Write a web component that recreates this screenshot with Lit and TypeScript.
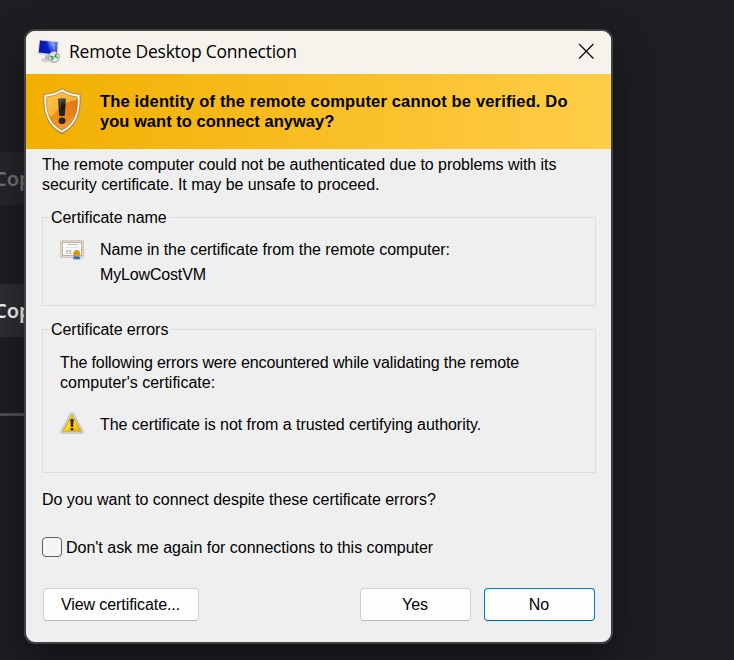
import { LitElement, html, css, svg } from "lit";
import { customElement, property } from "lit/decorators.js";

const computerIcon = svg`
  <svg width="24" height="24" viewBox="0 0 24 24">
    <defs>
      <linearGradient id="screen" x1="0" y1=".2" x2="1" y2="0">
        <stop offset="0" stop-color="#0a1594"/><stop offset=".42" stop-color="#0c22d2"/>
        <stop offset=".5" stop-color="#3358e6"/><stop offset=".72" stop-color="#8fa8f2"/><stop offset="1" stop-color="#2b45d0"/>
      </linearGradient>
      <linearGradient id="depth" x1="0" y1="0" x2="0" y2="1">
        <stop offset=".3" stop-color="#0618c4" stop-opacity="0"/><stop offset="1" stop-color="#0618c4" stop-opacity=".9"/>
      </linearGradient>
    </defs>
    <ellipse cx="9.500" cy="21" rx="5.500" ry="2.300" fill="#cfd1d2"/>
    <path d="M8 16l6 1 .5 4-6-.3z" fill="#b5b9bd"/>
    <path d="M2 .7L21.600 2.600 21 17.800 .6 15z" fill="#d0d3d8"/>
    <path d="M3 1.500L20.400 3.200 19.800 15.800 1.800 13.300z" fill="url(#screen)"/>
    <path d="M3 1.500L20.400 3.200 19.800 15.800 1.800 13.300z" fill="url(#depth)"/>
    <circle cx="17" cy="18" r="5.400" fill="#e4e6e5" stroke="#9a9e9f" stroke-width="1"/>
    <path d="M13.200 17l2.800 1.600-1.600 2.700M20.800 18.600L18 17.400l1.700-2.700" fill="none" stroke="#329447" stroke-width="1.500"/>
  </svg>`;

const shieldIcon = svg`
  <svg width="42" height="50" viewBox="0 0 42 50">
    <defs>
      <linearGradient id="face" x1="0" y1="0" x2=".8" y2="1">
        <stop offset="0" stop-color="#ffc43a"/><stop offset=".5" stop-color="#f29a1d"/>
        <stop offset="1" stop-color="#f29a35"/>
      </linearGradient>
      <linearGradient id="glow" x1="1" y1="0" x2=".2" y2="1">
        <stop offset="0" stop-color="#dd6508" stop-opacity=".8"/><stop offset="1" stop-color="#e97912" stop-opacity=".15"/>
      </linearGradient>
      <linearGradient id="mark" x1="0" y1="0" x2="0" y2="1">
        <stop offset="0" stop-color="#5b5140"/><stop offset=".45" stop-color="#17130d"/>
        <stop offset="1" stop-color="#2c2722"/>
      </linearGradient>
      <clipPath id="inside"><path d="M21 6Q28 10.500 36.200 11C37 25 34 37.300 21 44C8 37.300 5 25 5.800 11Q14 10.500 21 6Z"/></clipPath>
    </defs>
    <path d="M21 3.600Q28.500 8.800 39.300 9.200C40 27 36 41 21 48.400C6 41 2 27 2.700 9.200Q13.500 8.800 21 3.600Z" fill="#8d6a20" opacity=".45"/>
    <path d="M21 2.700Q28.500 7.900 39 8.300C40 26 36 39.800 21 47C6 39.800 2 26 3 8.300Q13.500 7.900 21 2.700Z" fill="#f7f5ed" stroke="#91856a" stroke-width=".9"/>
    <path d="M21 6Q28 10.500 36.200 11C37 25 34 37.300 21 44C8 37.300 5 25 5.800 11Q14 10.500 21 6Z" fill="url(#face)" stroke="#a86617" stroke-width=".7"/>
    <g clip-path="url(#inside)">
      <path d="M3 4H40V13Q22 15 15 26Q11 32 3 33Z" fill="#ffd565" opacity=".4"/>
      <path d="M40 13Q22 15 15 26Q11 32 3 33L12 42Q30 38 40 21Z" fill="url(#glow)"/>
    </g>
    <path d="M17 12.800Q21 11.700 25 12.800L23.700 30H18.300Z" fill="url(#mark)"/>
    <ellipse cx="21" cy="34.700" rx="3.500" ry="3.300" fill="#29231c"/>
    <path d="M18.300 13.800h1.600v9h-1.100z" fill="#918b7c" opacity=".4"/>
  </svg>`;

const certificateIcon = svg`
  <svg width="24" height="22" viewBox="0 0 24 22">
    <rect x=".5" y=".5" width="23" height="17" rx="1.500" fill="#ddd4c7" stroke="#c2b7a8"/>
    <rect x=".8" y=".8" width="22.400" height="16.400" rx="1" fill="none" stroke="#eee8dd" stroke-width="1" stroke-dasharray="1 1"/>
    <rect x="2.500" y="2.500" width="19" height="13" fill="#fff" stroke="#bcb0a0"/>
    <path d="M7.500 4.500h10" stroke="#a9b5dc"/>
    <path d="M5.500 7.500h13" stroke="#e0e0e6"/>
    <path d="M6 10.500h5.500M6 13.500h6" stroke="#c8c8ce"/>
    <path d="M6 11.700h6" stroke="#9a9dab" stroke-dasharray="2 1"/>
    <path d="M14.300 14.500L13.200 19.700 15.300 18.700 16.300 20 17 16zM18.700 14.500l1.600 5.200-2-.9-1.300 1.200-.5-4z" fill="#1768e3"/>
    <circle cx="16.700" cy="13.500" r="3.100" fill="#e3a412" stroke="#c4820b" stroke-width=".8"/>
    <circle cx="16.700" cy="13.500" r="1.100" fill="#bd7a0a"/>
  </svg>`;

const warningIcon = svg`
  <svg width="24" height="22" viewBox="0 0 24 22">
    <defs>
      <linearGradient id="warn" x1="0" y1="0" x2="1" y2="1">
        <stop offset="0" stop-color="#f2b900"/><stop offset=".5" stop-color="#ffda18"/>
        <stop offset="1" stop-color="#f4ae00"/>
      </linearGradient>
    </defs>
    <path d="M10.500 1.200Q12 0 13.500 1.200L23.300 19.500Q23.500 21 22 21.200H2Q.5 21 .7 19.500Z" fill="#d5d8dc" stroke="#b5b7bb" stroke-width=".8"/>
    <path d="M12 2.800L21.200 19.200H2.800Z" fill="url(#warn)" stroke="#c79612" stroke-width=".8"/>
    <path d="M10.400 7h3.200l-.5 8h-2.200z" fill="#25262a"/>
    <rect x="10.500" y="16" width="3" height="2.400" rx="1" fill="#25262a"/>
  </svg>`;

@customElement("group-box")
class GroupBox extends LitElement {
  @property() label = "";
  static styles = css`
    :host { display: block; }
    fieldset {
      box-sizing: border-box; height: 100%; min-width: 0; margin: 0;
      border: 1px solid #dcdcdc; padding: 0 17px;
    }
    legend {
      margin-left: -11px; padding: 0 2px; line-height: 22px; height: 20px;
      white-space: nowrap; letter-spacing: -.05px;
    }
  `;
  render() {
    return html`<fieldset><legend>${this.label}</legend><slot></slot></fieldset>`;
  }
}

@customElement("app-root")
class AppRoot extends LitElement {
  static styles = css`
    :host {
      display: block; position: relative; box-sizing: border-box;
      width: 734px; height: 660px; padding: 29px 0 0 24px; overflow: hidden;
      background: #1e1d22; color: #000;
      font: 16px/20px "Liberation Sans", Arial, sans-serif;
    }
    svg { display: block; flex: none; }
    .behind {
      position: absolute; left: 0; width: 40px; height: 53px;
      background: #2e2d32; color: #f4f4f4;
      font: 600 20px/53px "Noto Sans", "Open Sans", sans-serif;
    }
    .behind span { margin-left: -6px; }
    .faded { top: 152px; background: #26252a; color: #727175; }
    .solid { top: 284px; }
    .rule { position: absolute; left: 0; top: 413px; width: 40px; height: 3px; background: #4e4d51; }
    .dialog {
      position: relative; box-sizing: border-box; width: 589px; height: 615px;
      display: flex; flex-direction: column; border: 2px solid #414044;
      border-radius: 11px; background: #efefef; overflow: hidden;
    }
    .shade {
      position: absolute; left: 24px; top: 29px; width: 589px; height: 615px;
      border-radius: 11px; box-shadow: 0 14px 36px rgba(0, 0, 0, .42);
    }
    .titlebar {
      height: 43px; flex: none; display: flex; align-items: center;
      padding: 0 17px 3px 11px; background: #f6f3ec; box-sizing: border-box;
    }
    .title {
      flex: 1; margin-left: 8px; white-space: nowrap; letter-spacing: -.22px;
      font: 17.5px/24px "Open Sans", "Noto Sans", sans-serif;
    }
    .banner {
      height: 75px; flex: none; box-sizing: border-box; display: flex; align-items: center;
      gap: 17px; padding: 0 15px 2px; background: linear-gradient(90deg, #f2af00, #ffcd48);
      font-size: 16.5px; font-weight: 700;
    }
    .banner .line { letter-spacing: .16px; }
    .banner .line + .line { letter-spacing: .02px; }
    .line { display: block; white-space: nowrap; width: max-content; letter-spacing: -.045px; }
    .content { display: flex; flex-direction: column; padding: 6px 15px 0 16px; }
    .name { height: 99px; margin-top: 12px; }
    .errors { height: 154px; margin-top: 13px; }
    .entry { display: flex; gap: 16px; }
    .name .entry { padding-top: 10px; line-height: 25px; }
    .name .line + .line { letter-spacing: -.16px; }
    .name svg { margin-top: 3px; }
    .errors .intro { padding-top: 14px; }
    .intro .line { letter-spacing: -.12px; }
    .intro .line + .line { letter-spacing: 0; }
    .errors .entry { padding-top: 22px; }
    .errors svg { margin-top: -3px; }
    .question { margin-top: 17px; letter-spacing: -.02px; }
    .check { display: flex; align-items: center; gap: 4px; margin-top: 27px; }
    .check .line { line-height: 22px; height: 20px; letter-spacing: -.01px; }
    .box {
      box-sizing: border-box; width: 20px; height: 20px; border: 1px solid #626262;
      border-radius: 4px; background: #f5f5f5;
    }
    .buttons { display: flex; margin: 31px 1px 0; }
    button {
      box-sizing: border-box; width: 111px; height: 33px; padding: 0 1px 0 0; font: inherit; color: #000;
      border: 1px solid #d0d0d0; border-bottom-color: #bababa; border-radius: 4px; background: #fdfdfd;
    }
    .view { width: 156px; margin-right: auto; letter-spacing: -.08px; }
    .no { margin-left: 13px; border-color: #0078d4; border-bottom-color: #0067c0; }
  `;

  render() {
    return html`
      <div class="behind faded"><span>Copy</span></div>
      <div class="behind solid"><span>Copy</span></div>
      <div class="rule"></div>
      <div class="shade"></div>
      <section class="dialog">
        <header class="titlebar">
          ${computerIcon}
          <span class="title">Remote Desktop Connection</span>
          <svg width="16" height="16" viewBox="0 0 16 16"><path d="M1.100 1.100l14.300 14.300M15.400 1.100L1.100 15.400" stroke="#171717" stroke-width="1.400"/></svg>
        </header>
        <div class="banner">
          ${shieldIcon}
          <div>
            <span class="line">The identity of the remote computer cannot be verified. Do</span>
            <span class="line">you want to connect anyway?</span>
          </div>
        </div>
        <main class="content">
          <div>
            <span class="line">The remote computer could not be authenticated due to problems with its</span>
            <span class="line">security certificate. It may be unsafe to proceed.</span>
          </div>
          <group-box class="name" label="Certificate name">
            <div class="entry">
              ${certificateIcon}
              <div>
                <span class="line">Name in the certificate from the remote computer:</span>
                <span class="line">MyLowCostVM</span>
              </div>
            </div>
          </group-box>
          <group-box class="errors" label="Certificate errors">
            <div class="intro">
              <span class="line">The following errors were encountered while validating the remote</span>
              <span class="line">computer's certificate:</span>
            </div>
            <div class="entry">
              ${warningIcon}
              <span class="line">The certificate is not from a trusted certifying authority.</span>
            </div>
          </group-box>
          <span class="line question">Do you want to connect despite these certificate errors?</span>
          <label class="check">
            <span class="box"></span>
            <span class="line">Don't ask me again for connections to this computer</span>
          </label>
          <div class="buttons">
            <button class="view">View certificate...</button>
            <button>Yes</button>
            <button class="no">No</button>
          </div>
        </main>
      </section>
    `;
  }
}
